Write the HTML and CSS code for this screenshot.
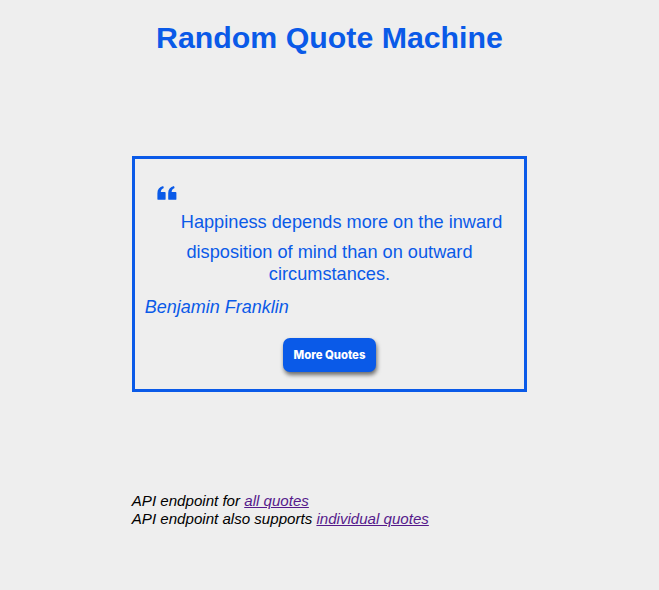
FILE: index.html
```html
<!DOCTYPE html>
<html lang="en">
<head>
<meta charset="utf-8">
<title>Random Quote Machine</title>
<link rel="stylesheet" href="styles.css">
</head>
<body>
  <h1 class="title">Random Quote Machine</h1>
  <div class="quote-box">
    <p class="quote-text"><span class="quote-icon"><svg width="20" height="14" viewBox="0 0 20 14"><path d="M0.4 13.3 L0.4 7.2 C0.4 3.4 2.4 0.9 6.2 0.1 L6.8 2.1 C4.9 2.9 3.9 4.2 3.8 6 L7.8 6 C8.3 6 8.6 6.3 8.6 6.8 L8.6 12.9 C8.6 13.5 8.3 13.8 7.8 13.8 L0.9 13.8 C0.6 13.8 0.4 13.6 0.4 13.3 Z M11.2 13.3 L11.2 7.2 C11.2 3.4 13.2 0.9 17 0.1 L17.6 2.1 C15.7 2.9 14.7 4.2 14.6 6 L18.6 6 C19.1 6 19.4 6.3 19.4 6.8 L19.4 12.9 C19.4 13.5 19.1 13.8 18.6 13.8 L11.7 13.8 C11.4 13.8 11.2 13.6 11.2 13.3 Z" fill="#0a5ae8"/></svg></span> Happiness depends more on the inward disposition of mind than on outward circumstances.</p>
    <p class="quote-author">Benjamin Franklin</p>
    <div class="actions">
      <button class="more-btn" type="button">More Quotes</button>
    </div>
  </div>
  <div class="footer">
    <div>API endpoint for <a class="link" href="#">all quotes</a></div>
    <div>API endpoint also supports <a class="link" href="#">individual quotes</a></div>
  </div>
</body>
</html>
```

FILE: styles.css
```css
html, body {
  margin: 0;
  padding: 0;
  background: #eeeeee;
}

body {
  font-family: "Liberation Sans", Arial, sans-serif;
  color: #000;
}

.title {
  margin: 21px 0 0;
  font-size: 30.3px;
  line-height: 34px;
  font-weight: bold;
  text-align: center;
  color: #0a5ae8;
}

.quote-box {
  width: 60%;
  margin: 101px auto 0;
  border: 3px solid #0a5ae8;
  padding: 10px;
  box-sizing: border-box;
  color: #0a5ae8;
}

.quote-text {
  margin: 17px 0 0;
  font-size: 18.2px;
  line-height: 22px;
  text-align: center;
}

.quote-icon {
  display: inline-block;
  width: 20px;
  height: 55px;
  vertical-align: -13px;
  margin-right: -1px;
}

.quote-icon svg {
  display: block;
}

.quote-author {
  margin: 11px 0 0;
  font-size: 18px;
  line-height: 22px;
  font-style: italic;
}

.actions {
  display: flex;
  justify-content: center;
  margin: 20px 0 7px;
}

.more-btn {
  width: 93px;
  height: 34px;
  border: none;
  border-radius: 7px;
  background: #0a5ae8;
  color: #fff;
  font-family: Inter, "Open Sans", sans-serif;
  font-weight: 800;
  font-size: 11.3px;
  padding: 0;
  box-shadow: 1px 3px 4px rgba(0, 0, 0, 0.55);
}

.footer {
  width: 60%;
  margin: 100px auto 0;
  font-size: 15.1px;
  line-height: 18px;
  font-style: italic;
  color: #000;
}

.link {
  color: #551a8b;
  text-decoration: underline;
}
```
